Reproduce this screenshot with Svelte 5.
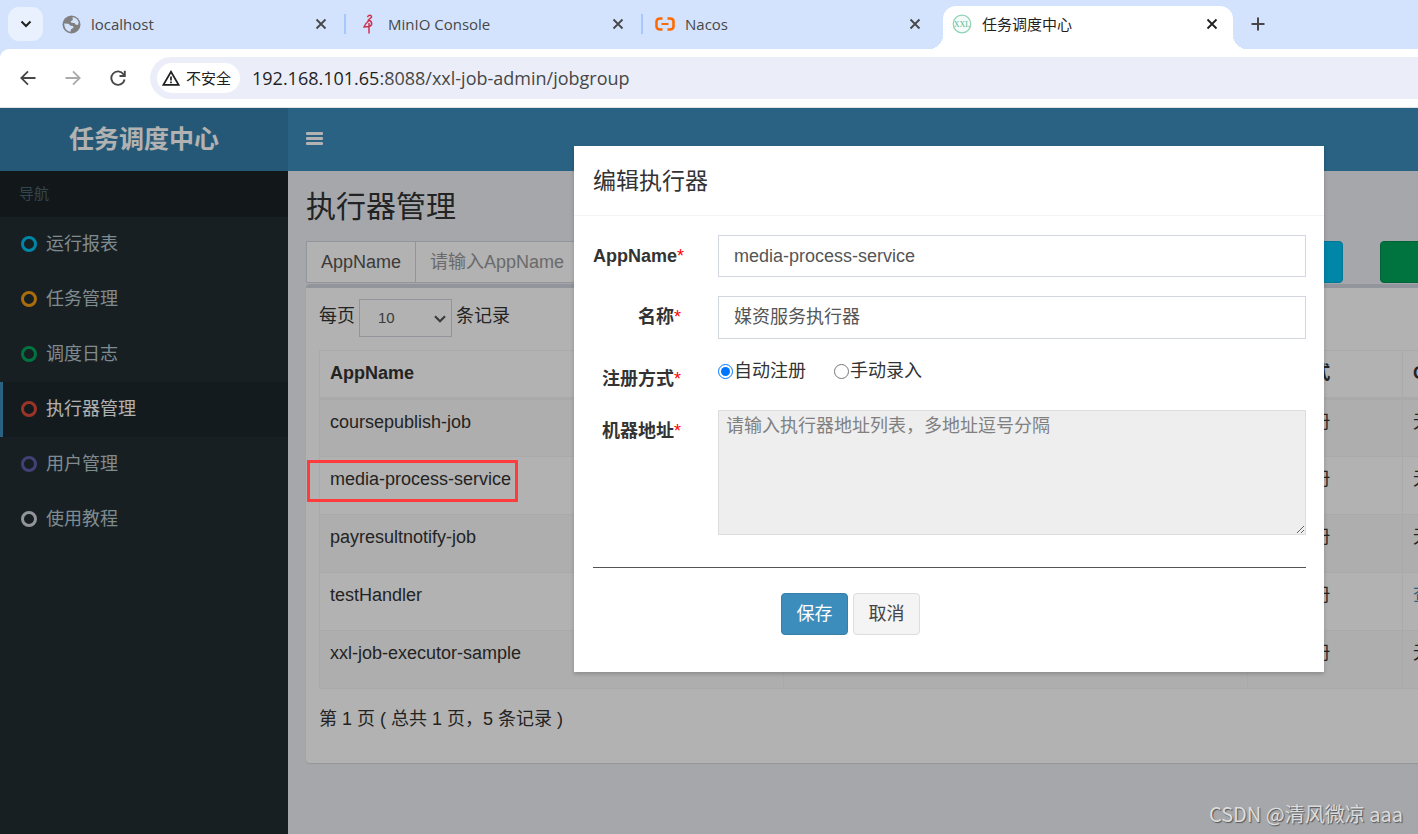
<script>
  const tabs = [
    { title: 'localhost', icon: 'globe' },
    { title: 'MinIO Console', icon: 'minio' },
    { title: 'Nacos', icon: 'nacos' },
    { title: '任务调度中心', icon: 'xxl', active: true }
  ];

  const menu = [
    { label: '运行报表', color: '#00c0ef' },
    { label: '任务管理', color: '#f39c12' },
    { label: '调度日志', color: '#00a65a' },
    { label: '执行器管理', color: '#dd4b39', active: true },
    { label: '用户管理', color: '#605ca8' },
    { label: '使用教程', color: '#d2d6de' }
  ];

  const groups = [
    { app: 'coursepublish-job', type: '自动注册', address: '无' },
    { app: 'media-process-service', type: '自动注册', address: '无', marked: true },
    { app: 'payresultnotify-job', type: '自动注册', address: '无' },
    { app: 'testHandler', type: '自动注册', address: '查看', link: true },
    { app: 'xxl-job-executor-sample', type: '自动注册', address: '无' }
  ];

  let appName = $state('media-process-service');
  let title = $state('媒资服务执行器');
  let mode = $state('auto');
</script>

<div class="window">
  <div class="tabstrip">
    <button class="tab-search" aria-label="搜索标签页">
      <svg width="12" height="12" viewBox="0 0 12 12" fill="none" stroke="#1f1f1f" stroke-width="2"><path d="M1.5 3.5 6 8l4.500-4.500" /></svg>
    </button>
    {#each tabs as tab}
      <div class="tab" class:active={tab.active}>
        <span class="favicon">
          {#if tab.icon === 'globe'}
            <svg width="19" height="19" viewBox="0 0 19 19"><circle cx="9.500" cy="9.500" r="9" fill="#808080" /><path d="M10.500 2.200C13.500 2.200 16 4.500 16.700 7.500L16 10 13.500 9.500 12.500 8 9.500 7.800 8.500 6.500 10.800 5zM2.200 8.500l4.300.2 2 2 2.500.3.500 1.700-2.500 1.500-.5 2.600C5 16.500 2.200 13.500 2.200 8.500z" fill="#d3e3fd" /></svg>
          {:else if tab.icon === 'minio'}
            <svg width="19" height="20" viewBox="0 0 19 20" fill="none" stroke="#d0304f" stroke-width="1.500"><path d="M8.500 3.200c.8-2.800 4.200-2.400 4 0L9.500 6c1.500.6 3.200 1.500 3.200 3.500 0 1.800-1.200 2.700-2.700 3L5 13c.8-2.500 2.500-4.500 5-6.500M10 9v10.500" /></svg>
          {:else if tab.icon === 'nacos'}
            <svg width="20" height="14" viewBox="0 0 20 14" fill="none" stroke="#ff6a00"><path d="M7.500 1.500H5C3 1.500 1.500 2.500 1.500 4.500v5c0 2 1.500 3 3.500 3h2.500M12.500 1.500H15c2 0 3.500 1 3.500 3v5c0 2-1.500 3-3.500 3h-2.500" stroke-width="2.600" /><path d="M6.500 7h7" stroke-width="2" /></svg>
          {:else}
            <svg width="20" height="20" viewBox="0 0 20 20"><circle cx="10" cy="10" r="8.800" fill="#f4fbf8" stroke="#8fd3b6" stroke-width="1.200" /><text x="10" y="12.500" text-anchor="middle" font-family="Liberation Serif, serif" font-size="8" fill="#5cba90">XXL</text></svg>
          {/if}
        </span>
        <span class="tab-title">{tab.title}</span>
        <button class="icon-btn" aria-label="关闭">
          <svg width="12" height="12" viewBox="0 0 12 12" stroke="currentColor" stroke-width="1.800"><path d="M1.500 1.500l9 9M10.500 1.500l-9 9" /></svg>
        </button>
      </div>
    {/each}
    <button class="icon-btn new-tab" aria-label="新标签页">
      <svg width="14" height="14" viewBox="0 0 14 14" stroke="currentColor" stroke-width="2"><path d="M7 .5v13M.5 7h13" /></svg>
    </button>
  </div>

  <div class="toolbar">
    <button class="icon-btn nav" aria-label="后退">
      <svg width="16" height="16" viewBox="0 0 16 16" fill="none" stroke="#474747" stroke-width="1.800"><path d="M15.500 8H1.500M8 1.300 1.300 8 8 14.700" /></svg>
    </button>
    <button class="icon-btn nav" aria-label="前进">
      <svg width="16" height="16" viewBox="0 0 16 16" fill="none" stroke="#aaa" stroke-width="1.800"><path d="M.5 8h14M8 1.300 14.700 8 8 14.700" /></svg>
    </button>
    <button class="icon-btn nav" aria-label="重新加载">
      <svg width="16" height="16" viewBox="0 0 16 16" fill="none" stroke="#474747" stroke-width="1.900"><path d="M14.600 9.500A6.700 6.700 0 1 1 13.500 4.200L14.500 5.500M14.800.8v5.200H9.500" /></svg>
    </button>
    <div class="omnibox">
      <button class="chip">
        <svg width="18" height="16" viewBox="0 0 18 16" fill="none" stroke="#1f1f1f" stroke-width="1.700"><path d="M9 1.700 16.600 14.800H1.400zM9 6.500v4M9 11.500v1.700" /></svg>
        不安全
      </button>
      <div class="url"><b>192.168.101.65</b>:8088/xxl-job-admin/jobgroup</div>
    </div>
  </div>

  <div class="viewport">
    <div class="app">
      <aside class="sidebar">
        <a class="brand" href="#top">任务调度中心</a>
        <div class="nav-head">导航</div>
        <nav>
          {#each menu as item}
            <a class="menu-item" class:active={item.active} href="#menu">
              <span class="ring" style:border-color={item.color}></span>{item.label}
            </a>
          {/each}
        </nav>
      </aside>

      <div class="main">
        <header class="navbar">
          <button class="icon-btn burger" aria-label="切换导航">
            <svg width="17" height="15" viewBox="0 0 17 15" fill="#fff"><rect y="0" width="17" height="3" rx="1" /><rect y="5" width="17" height="3" rx="1" /><rect y="10" width="17" height="3" rx="1" /></svg>
          </button>
        </header>
        <div class="content">
          <h1>执行器管理</h1>
          <div class="filters">
            <div class="group">
              <label for="filter-app">AppName</label>
              <input id="filter-app" placeholder="请输入AppName" />
            </div>
            <div class="group">
              <input aria-label="名称" />
            </div>
            <button class="block info" aria-label="搜索"></button>
            <button class="block success" aria-label="新增"></button>
          </div>

          <section class="box">
            <div class="page-size">
              <label for="size">每页</label>
              <span class="select">
                <select id="size"><option>10</option></select>
                <svg width="12" height="8" viewBox="0 0 12 8" fill="none" stroke="#555" stroke-width="2.200"><path d="M1 1.200l5 5 5-5" /></svg>
              </span>
              <span>条记录</span>
            </div>
            <table>
              <colgroup><col class="c30" /><col class="c30" /><col class="c10" /><col class="c10" /><col /></colgroup>
              <thead>
                <tr><th>AppName</th><th></th><th>注册方式</th><th>OnLine</th><th></th></tr>
              </thead>
              <tbody>
                {#each groups as row}
                  <tr>
                    <td>{#if row.marked}<span class="marked">{row.app}</span>{:else}{row.app}{/if}</td>
                    <td></td>
                    <td>{row.type}</td>
                    <td>{#if row.link}<a href="#address">{row.address}</a>{:else}{row.address}{/if}</td>
                    <td></td>
                  </tr>
                {/each}
              </tbody>
            </table>
            <p class="summary">第 1 页 ( 总共 1 页，5 条记录 )</p>
          </section>
        </div>
      </div>

      <div class="backdrop"></div>
      <div class="modal-layer">
        <div class="modal" role="dialog" aria-labelledby="dialog-title">
          <h2 id="dialog-title">编辑执行器</h2>
          <form onsubmit={(e) => e.preventDefault()}>
            <div class="fields">
              <label class="name" for="app-name">AppName<i>*</i></label>
              <input id="app-name" class="text" bind:value={appName} />
              <label class="name" for="title">名称<i>*</i></label>
              <input id="title" class="text" bind:value={title} />
              <span class="name" id="mode-label">注册方式<i>*</i></span>
              <div class="radios" role="radiogroup" aria-labelledby="mode-label">
                <label><input type="radio" value="auto" bind:group={mode} />自动注册</label>
                <label><input type="radio" value="manual" bind:group={mode} />手动录入</label>
              </div>
              <label class="name" for="address">机器地址<i>*</i></label>
              <textarea id="address" readonly placeholder="请输入执行器地址列表，多地址逗号分隔"></textarea>
            </div>
            <hr />
            <div class="actions">
              <button class="btn primary" type="submit">保存</button>
              <button class="btn" type="button">取消</button>
            </div>
          </form>
        </div>
      </div>
    </div>
    <div class="watermark">CSDN @清风微凉 aaa</div>
  </div>
</div>

<style>
  :global(body) { overflow: hidden; }
  * { box-sizing: border-box; }
  button, input, select, textarea { font: inherit; color: inherit; }
  a { text-decoration: none; color: #3c8dbc; }

  .window {
    display: flex;
    flex-direction: column;
    height: 100vh;
    overflow: hidden;
    background: #d3e3fd;
    font-family: "Open Sans", "Noto Sans CJK SC", sans-serif;
    color: #333;
  }

  /* browser frame */
  .tabstrip { display: flex; flex: none; height: 49px; padding: 6px 0 0 8px; }
  .tab-search {
    display: grid;
    place-items: center;
    width: 35px;
    height: 34px;
    margin: 1px 9px 0 0;
    padding: 0;
    border: 0;
    border-radius: 11px;
    background: #e9f1fe;
  }
  .tab {
    position: relative;
    display: flex;
    align-items: center;
    width: 290px;
    margin-right: 7px;
    padding: 0 15px 7px 9px;
    border-radius: 13px 13px 0 0;
    font-size: 15px;
    color: #474747;
  }
  .tab:nth-child(3)::after, .tab:nth-child(2)::after {
    content: "";
    position: absolute;
    right: -4px;
    top: 8px;
    width: 2px;
    height: 20px;
    background: #a8c7fa;
  }
  .tab.active { background: #fff; color: #1f1f1f; }
  .tab.active::before, .tab.active::after {
    content: "";
    position: absolute;
    bottom: 0;
    width: 14px;
    height: 14px;
  }
  .tab.active::before { left: -14px; background: radial-gradient(circle at 0 0, transparent 14px, #fff 14px); }
  .tab.active::after { right: -14px; background: radial-gradient(circle at 100% 0, transparent 14px, #fff 14px); }
  .favicon { display: grid; place-items: center; width: 20px; margin-right: 10px; }
  .tab-title { flex: 1; line-height: 20px; }
  .icon-btn { display: grid; place-items: center; padding: 0; border: 0; background: none; }
  .new-tab { width: 35px; height: 36px; color: #474747; }

  .toolbar {
    display: flex;
    flex: none;
    align-items: center;
    height: 59px;
    padding: 0 0 1px 5px;
    border-bottom: 1px solid #dfe3e8;
    border-radius: 9px 0 0 0;
    background: #fff;
  }
  .nav { width: 45px; height: 36px; }
  .omnibox {
    display: flex;
    flex: 1;
    align-items: center;
    height: 42px;
    margin-left: 10px;
    padding-left: 7px;
    border-radius: 21px 0 0 21px;
    background: #ebeef8;
  }
  .chip {
    display: flex;
    align-items: center;
    gap: 6px;
    height: 30px;
    padding: 0 9px 0 5px;
    border: 0;
    border-radius: 15px;
    background: #fff;
    font-size: 15px;
    color: #1f1f1f;
  }
  .url { margin-left: 12px; font-size: 18px; color: #474747; }
  .url b { font-weight: 400; color: #1f1f1f; }

  /* page, wider than the window and cropped at its right edge */
  .viewport { position: relative; display: flex; flex: 1; overflow: hidden; }
  .app {
    position: relative;
    display: flex;
    flex: none;
    width: calc(100% + 480px);
    background: #ecf0f5;
    font-family: "Liberation Sans", "Noto Sans CJK SC", sans-serif;
    font-size: 18px;
    line-height: 25px;
  }
  .sidebar { flex: none; width: 288px; background: #222d32; }
  .brand {
    display: block;
    background: #367fa9;
    color: #fff;
    font-size: 25px;
    font-weight: 700;
    line-height: 63px;
    text-align: center;
  }
  .nav-head { padding: 0 19px; background: #1a2226; color: #4b646f; font-size: 15px; line-height: 46px; }
  .menu-item {
    display: flex;
    align-items: center;
    gap: 9px;
    height: 55px;
    padding: 0 0 1px 18px;
    border-left: 3px solid transparent;
    color: #b8c7ce;
  }
  .menu-item.active { border-left-color: #3c8dbc; background: #1e282c; color: #fff; }
  .ring { width: 16px; height: 16px; border: 3px solid; border-radius: 50%; }

  .main { flex: 1; min-width: 0; }
  .navbar { display: flex; align-items: center; height: 63px; padding-left: 18px; background: #3c8dbc; }
  .content { padding: 18px 18px 0; }
  h1 { margin: 0 0 16px; font-size: 30px; font-weight: 400; line-height: 36px; }

  .filters { display: grid; grid-template-columns: 366px 366px 231px 231px; gap: 37px; height: 43px; }
  .group { display: flex; height: 42px; border: 1px solid #d2d6de; background: #fff; color: #555; }
  .group label { padding: 8px 14px; border-right: 1px solid #d2d6de; }
  .group input { flex: 1; min-width: 0; padding: 0 14px; border: 0; background: none; }
  .group input::placeholder { color: #999; }
  .block { height: 42px; border: 1px solid; border-radius: 4px; color: #fff; }
  .info { border-color: #00acd6; background: #00c0ef; }
  .success { border-color: #008d4c; background: #00a65a; }

  .box {
    padding: 11px 13px 31px;
    border-top: 4px solid #d2d6de;
    border-radius: 4px;
    background: #fff;
    box-shadow: 0 1px 1px rgba(0, 0, 0, 0.1);
  }
  .page-size { display: flex; align-items: flex-start; gap: 4px; line-height: 34px; }
  .select { position: relative; height: 38px; margin-bottom: 13px; }
  .select select {
    appearance: none;
    display: block;
    width: 93px;
    height: 38px;
    padding: 0 18px;
    border: 1px solid #d2d6de;
    border-radius: 0;
    background: #fff;
    color: #555;
    font-size: 15px;
  }
  .select svg { position: absolute; right: 6px; top: 16px; }

  table { width: 100%; table-layout: fixed; border-collapse: collapse; }
  .c30 { width: 30%; }
  .c10 { width: 10%; }
  th, td { padding: 10px; border: 1px solid #f4f4f4; text-align: left; vertical-align: top; white-space: nowrap; }
  th { height: 48px; border-bottom-width: 3px; }
  td { height: 58px; }
  tbody tr:nth-child(odd) { background: #f9f9f9; }
  .marked { position: relative; }
  .marked::after {
    content: "";
    position: absolute;
    z-index: 2;
    inset: -9px -7px -13px -23px;
    border: 3px solid #ff3b3b;
  }
  .summary { margin: 18px 0 0; }

  .backdrop { position: absolute; z-index: 1; inset: 0; background: rgba(0, 0, 0, 0.3); }
  .modal-layer { position: absolute; z-index: 3; inset: 0; padding-top: 38px; }
  .modal { width: 750px; margin: 0 auto; background: #fff; box-shadow: 0 2px 4px rgba(0, 0, 0, 0.2); }
  h2 { margin: 0; padding: 20px 19px 18px; border-bottom: 1px solid #f4f4f4; font-size: 23px; font-weight: 400; line-height: 31px; }
  form { padding: 19px 18px 37px 19px; }
  .fields { display: grid; grid-template-columns: 88px 1fr; grid-template-rows: 42px 43px 33px 125px; gap: 19px 37px; }
  .name { padding-top: 9px; font-weight: 700; text-align: right; white-space: nowrap; }
  .name i { color: #f00; font-style: normal; font-weight: 400; }
  .text { padding: 0 15px; border: 1px solid #d2d6de; background: #fff; color: #555; }
  .radios { display: flex; gap: 28px; }
  .radios label { display: flex; align-items: center; height: 26px; }
  .radios input { width: 15px; height: 15px; margin: 0 1px 0 0; accent-color: #0075ff; }
  textarea { padding: 3px 7px; border: 1px solid #ddd; background: #eee; resize: both; }
  textarea::placeholder { color: #808080; }
  hr { height: 1px; margin: 32px 0 25px; border: 0; background: #555; }
  .actions { display: flex; gap: 5px; padding-left: 188px; }
  .btn { width: 67px; height: 42px; padding: 0; border: 1px solid #ddd; border-radius: 4px; background: #f4f4f4; color: #444; }
  .primary { border-color: #367fa9; background: #3c8dbc; color: #fff; }

  .watermark {
    position: absolute;
    z-index: 4;
    right: 15px;
    bottom: 6px;
    color: #dcdcdc;
    font: 20px/28px "Noto Sans CJK SC", sans-serif;
    text-shadow: 1px 1px 1px #555;
  }
</style>
